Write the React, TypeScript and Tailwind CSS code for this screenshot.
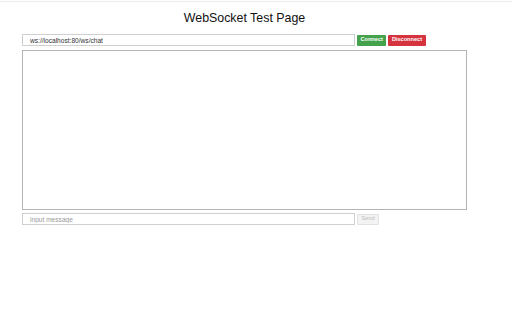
import { useState } from "react";

export default function App() {
  const [url, setUrl] = useState("ws://localhost:80/ws/chat");
  const [msg, setMsg] = useState("");
  return (
    <div className="w-[512px] h-[320px] bg-white font-['Liberation_Sans',Arial,sans-serif] text-black overflow-hidden">
      <div className="h-px mt-px bg-[#ececec]" />
      <div className="ml-[22px] w-[445px]">
        <h1 className="mt-[9px] text-center text-[12.4px] leading-[15px] font-normal text-[#111]">
          WebSocket Test Page
        </h1>
        <div className="mt-[8px] flex items-center gap-[2px]">
          <input
            value={url}
            onChange={(e) => setUrl(e.target.value)}
            className="w-[333px] h-[12px] border border-[#cfcfcf] px-[7px] text-[6.6px] text-[#333] outline-none"
          />
          <button className="h-[11px] px-[3.5px] bg-[#43a24b] text-white text-[5.6px] font-semibold rounded-[1px] leading-none">
            Connect
          </button>
          <button className="h-[11px] px-[3.5px] bg-[#d5343f] text-white text-[5.6px] font-semibold rounded-[1px] leading-none">
            Disconnect
          </button>
        </div>
        <div className="mt-[4px] h-[160px] border border-[#b4b4b4]" />
        <div className="mt-[3px] flex items-center gap-[2px]">
          <input
            value={msg}
            onChange={(e) => setMsg(e.target.value)}
            placeholder="input message"
            className="w-[333px] h-[12px] border border-[#cfcfcf] px-[7px] text-[6.6px] text-[#222] placeholder:text-[#9a9a9a] outline-none"
          />
          <button
            disabled
            className="h-[11px] px-[3.5px] bg-[#f3f3f3] border border-[#e2e2e2] text-[#bdbdbd] text-[5.6px] rounded-[1px] leading-none"
          >
            Send
          </button>
        </div>
      </div>
    </div>
  );
}
